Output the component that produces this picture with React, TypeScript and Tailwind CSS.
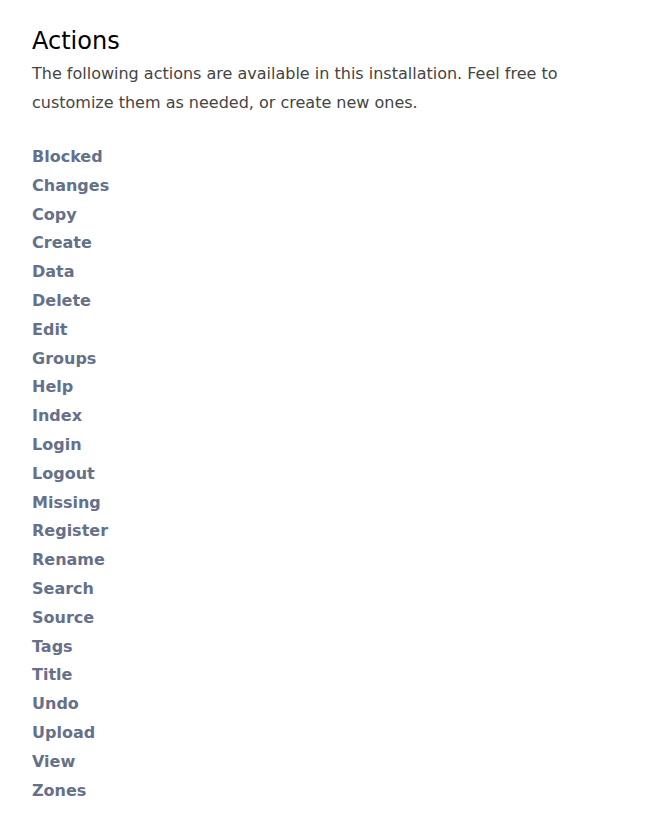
const actions = [
  'Blocked', 'Changes', 'Copy', 'Create', 'Data', 'Delete', 'Edit', 'Groups',
  'Help', 'Index', 'Login', 'Logout', 'Missing', 'Register', 'Rename', 'Search',
  'Source', 'Tags', 'Title', 'Undo', 'Upload', 'View', 'Zones',
]

export default function App() {
  return (
    <div className="min-h-screen bg-white px-8 pt-[25px] font-['DejaVu_Sans',sans-serif]">
      <h1 className="text-2xl leading-8 text-black">Actions</h1>
      <p className="mt-[3px] text-base leading-[1.8] text-[#444]">
        The following actions are available in this installation. Feel free to customize them as needed, or create new ones.
      </p>
      <ul className="mt-[25.5px]">
        {actions.map((a) => (
          <li key={a} className="text-base font-bold leading-[1.8]">
            <a href="#" className="text-[#65708b]">{a}</a>
          </li>
        ))}
      </ul>
    </div>
  )
}
